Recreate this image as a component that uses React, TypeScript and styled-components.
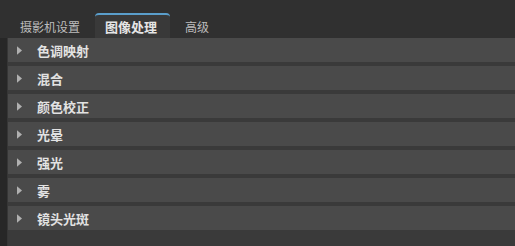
import React from "react";
import styled, { createGlobalStyle } from "styled-components";

const GlobalStyle = createGlobalStyle`
  html, body {
    margin: 0;
    padding: 0;
    background: #303030;
    overflow: hidden;
  }
  body {
    font-family: "Noto Sans CJK SC", "Noto Sans", sans-serif;
  }
`;

const tabs = ["摄影机设置", "图像处理", "高级"];
const sections = ["色调映射", "混合", "颜色校正", "光晕", "强光", "雾", "镜头光斑"];

const App: React.FC = () => {
  return (
    <>
      <GlobalStyle />
      <StyledWindow>
        <StyledTabBar>
          {tabs.map((t, i) => (
            <StyledTab key={t} $active={i === 1}>
              {t}
            </StyledTab>
          ))}
        </StyledTabBar>
        <StyledBody>
          <StyledGutter />
          <StyledPanel>
            {sections.map((s) => (
              <StyledRow key={s}>
                <StyledArrow viewBox="0 0 6 10">
                  <path d="M0 0 L6 5 L0 10 Z" fill="#b0b0b0" />
                </StyledArrow>
                <StyledLabel>{s}</StyledLabel>
              </StyledRow>
            ))}
          </StyledPanel>
        </StyledBody>
      </StyledWindow>
    </>
  );
};
export default App;

const StyledWindow = styled.div`
  width: 515px;
  height: 246px;
  display: flex;
  flex-direction: column;
  background: #303030;
`;

const StyledTabBar = styled.div`
  display: flex;
  align-items: flex-end;
  gap: 3px;
  height: 38px;
  padding-left: 8px;
  box-sizing: border-box;
`;

const StyledTab = styled.div<{ $active?: boolean }>`
  height: 25px;
  box-sizing: border-box;
  padding: ${(p) => (p.$active ? "0 13px 0 10px" : "0 12px")};
  display: flex;
  align-items: center;
  font-size: ${(p) => (p.$active ? "13px" : "12px")};
  color: ${(p) => (p.$active ? "#e6e6e6" : "#bdbdbd")};
  font-weight: ${(p) => (p.$active ? 700 : 400)};
  background: ${(p) => (p.$active ? "#393939" : "transparent")};
  border-top: 2px solid ${(p) => (p.$active ? "#5a9ecb" : "transparent")};
  border-radius: 4px 4px 0 0;
`;

const StyledBody = styled.div`
  flex: 1;
  display: flex;
`;

const StyledGutter = styled.div`
  width: 7px;
  background: #272727;
  border-right: 1px solid #363636;
`;

const StyledPanel = styled.div`
  flex: 1;
  display: flex;
  flex-direction: column;
  gap: 4px;
  background: #3a3a3a;
`;

const StyledRow = styled.div`
  height: 24px;
  display: flex;
  align-items: center;
  background: #4a4a4a;
  padding-left: 9px;
`;

const StyledArrow = styled.svg`
  width: 5px;
  height: 9px;
  margin-right: 15px;
`;

const StyledLabel = styled.span`
  font-size: 13px;
  font-weight: 700;
  color: #e2e2e2;
`;
